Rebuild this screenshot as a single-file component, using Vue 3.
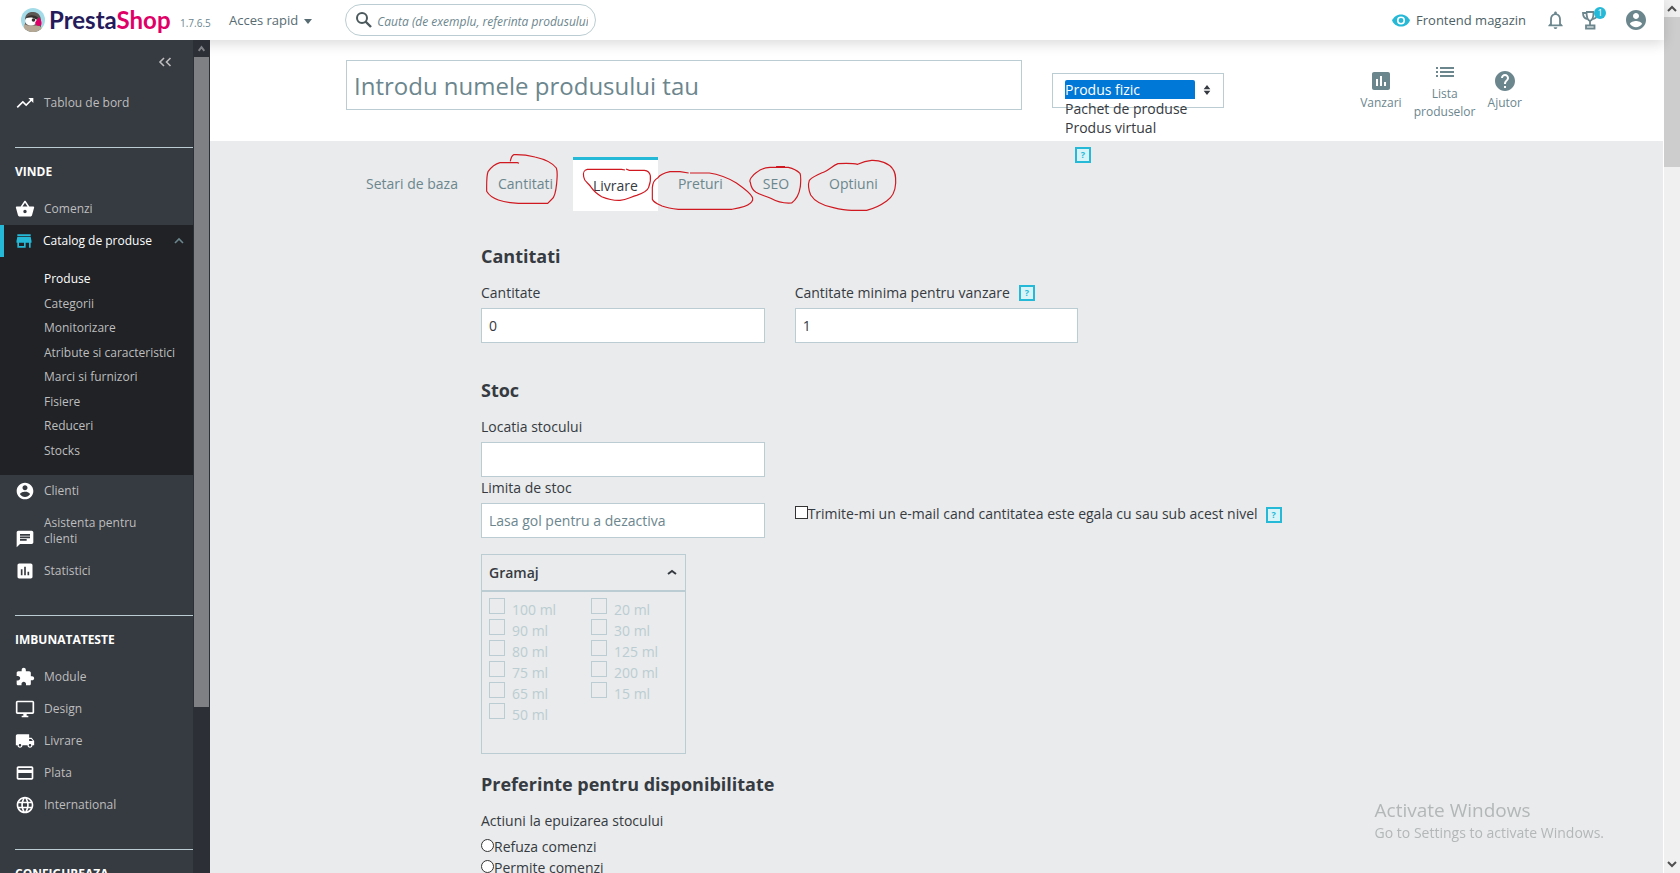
<script setup>
import { ref } from 'vue'

const icons = {
  trending: 'M16 6l2.29 2.29-4.88 4.88-4-4L2 16.59 3.41 18l6-6 4 4 6.3-6.29L22 12V6z',
  basket: 'M17.21 9l-4.38-6.56c-.19-.28-.51-.42-.83-.42-.32 0-.64.14-.83.43L6.79 9H2c-.55 0-1 .45-1 1 0 .09.01.18.04.27l2.54 9.27c.23.84 1 1.46 1.92 1.46h13c.92 0 1.69-.62 1.93-1.46l2.54-9.27L23 10c0-.55-.45-1-1-1h-4.79zM9 9l3-4.4L15 9H9zm3 8c-1.1 0-2-.9-2-2s.9-2 2-2 2 .9 2 2-.9 2-2 2z',
  store: 'M20 4H4v2h16V4zm1 10v-2l-1-5H4l-1 5v2h1v6h10v-6h4v6h2v-6h1zm-9 4H6v-4h6v4z',
  account: 'M12 2C6.48 2 2 6.48 2 12s4.48 10 10 10 10-4.48 10-10S17.52 2 12 2zm0 3c1.66 0 3 1.34 3 3s-1.34 3-3 3-3-1.34-3-3 1.34-3 3-3zm0 14.2c-2.5 0-4.71-1.28-6-3.22.03-1.99 4-3.08 6-3.08 1.99 0 5.97 1.09 6 3.08-1.29 1.94-3.5 3.22-6 3.22z',
  chat: 'M20 2H4c-1.1 0-1.99.9-1.99 2L2 22l4-4h14c1.1 0 2-.9 2-2V4c0-1.1-.9-2-2-2zM6 9h12v2H6V9zm8 5H6v-2h8v2zm4-6H6V6h12v2z',
  assessment: 'M19 3H5c-1.1 0-2 .9-2 2v14c0 1.1.9 2 2 2h14c1.1 0 2-.9 2-2V5c0-1.1-.9-2-2-2zM9 17H7v-7h2v7zm4 0h-2V7h2v10zm4 0h-2v-4h2v4z',
  extension: 'M20.5 11H19V7c0-1.1-.9-2-2-2h-4V3.5C13 2.12 11.88 1 10.5 1S8 2.12 8 3.5V5H4c-1.1 0-1.99.9-1.99 2v3.8H3.5c1.49 0 2.7 1.21 2.7 2.7s-1.21 2.7-2.7 2.7H2V20c0 1.1.9 2 2 2h3.8v-1.5c0-1.49 1.21-2.7 2.7-2.7 1.49 0 2.7 1.21 2.7 2.7V22H17c1.1 0 2-.9 2-2v-4h1.5c1.38 0 2.5-1.12 2.5-2.5S21.88 11 20.5 11z',
  desktop: 'M21 2H3c-1.1 0-2 .9-2 2v12c0 1.1.9 2 2 2h7v2H8v2h8v-2h-2v-2h7c1.1 0 2-.9 2-2V4c0-1.1-.9-2-2-2zm0 14H3V4h18v12z',
  shipping: 'M20 8h-3V4H3c-1.1 0-2 .9-2 2v11h2c0 1.66 1.34 3 3 3s3-1.34 3-3h6c0 1.66 1.34 3 3 3s3-1.34 3-3h2v-5l-3-4zM6 18.5c-.83 0-1.5-.67-1.5-1.5s.67-1.5 1.5-1.5 1.5.67 1.5 1.5-.67 1.5-1.5 1.5zm13.5-9l1.96 2.5H17V9.5h2.5zm-1.5 9c-.83 0-1.5-.67-1.5-1.5s.67-1.5 1.5-1.5 1.5.67 1.5 1.5-.67 1.5-1.5 1.5z',
  payment: 'M20 4H4c-1.11 0-1.99.89-1.99 2L2 18c0 1.11.89 2 2 2h16c1.11 0 2-.89 2-2V6c0-1.11-.89-2-2-2zm0 14H4v-6h16v6zm0-10H4V6h16v2z',
  language: 'M11.99 2C6.47 2 2 6.48 2 12s4.47 10 9.99 10C17.52 22 22 17.52 22 12S17.52 2 11.99 2zm6.93 6h-2.95c-.32-1.25-.78-2.45-1.38-3.56 1.84.63 3.37 1.91 4.33 3.56zM12 4.04c.83 1.2 1.48 2.53 1.91 3.96h-3.82c.43-1.43 1.08-2.76 1.91-3.96zM4.26 14C4.1 13.36 4 12.69 4 12s.1-1.36.26-2h3.38c-.08.66-.14 1.32-.14 2 0 .68.06 1.34.14 2H4.26zm.82 2h2.95c.32 1.25.78 2.45 1.38 3.56-1.84-.63-3.37-1.9-4.33-3.56zm2.95-8H5.08c.96-1.66 2.49-2.93 4.33-3.56C8.81 5.55 8.35 6.75 8.03 8zM12 19.96c-.83-1.2-1.48-2.53-1.91-3.96h3.82c-.43 1.43-1.08 2.76-1.91 3.96zM14.34 14H9.66c-.09-.66-.16-1.32-.16-2 0-.68.07-1.35.16-2h4.68c.09.65.16 1.32.16 2 0 .68-.07 1.34-.16 2zm.25 5.56c.6-1.11 1.06-2.31 1.38-3.56h2.95c-.96 1.65-2.49 2.93-4.33 3.56zM16.36 14c.08-.66.14-1.32.14-2 0-.68-.06-1.34-.14-2h3.38c.16.64.26 1.31.26 2s-.1 1.36-.26 2h-3.38z',
  list: 'M3 13h2v-2H3v2zm0 4h2v-2H3v2zm0-8h2V7H3v2zm4 4h14v-2H7v2zm0 4h14v-2H7v2zM7 7v2h14V7H7z',
  help: 'M12 2C6.48 2 2 6.48 2 12s4.48 10 10 10 10-4.48 10-10S17.52 2 12 2zm1 17h-2v-2h2v2zm2.07-7.75l-.9.92C13.45 12.9 13 13.5 13 15h-2v-.5c0-1.1.45-2.1 1.17-2.83l1.24-1.26c.37-.36.59-.86.59-1.41 0-1.1-.9-2-2-2s-2 .9-2 2H8c0-2.21 1.79-4 4-4s4 1.79 4 4c0 .88-.36 1.68-.93 2.25z'
}

// meniul lateral
const sections = [
  {
    title: '',
    items: [{ label: 'Tablou de bord', icon: 'trending' }]
  },
  {
    title: 'VINDE',
    items: [
      { label: 'Comenzi', icon: 'basket' },
      {
        label: 'Catalog de produse',
        icon: 'store',
        active: true,
        children: [
          'Produse',
          'Categorii',
          'Monitorizare',
          'Atribute si caracteristici',
          'Marci si furnizori',
          'Fisiere',
          'Reduceri',
          'Stocks'
        ]
      },
      { label: 'Clienti', icon: 'account' },
      { label: 'Asistenta pentru clienti', icon: 'chat' },
      { label: 'Statistici', icon: 'assessment' }
    ]
  },
  {
    title: 'IMBUNATATESTE',
    items: [
      { label: 'Module', icon: 'extension' },
      { label: 'Design', icon: 'desktop' },
      { label: 'Livrare', icon: 'shipping' },
      { label: 'Plata', icon: 'payment' },
      { label: 'International', icon: 'language' }
    ]
  },
  { title: 'CONFIGUREAZA', items: [] }
]

const tabs = ['Setari de baza', 'Cantitati', 'Livrare', 'Preturi', 'SEO', 'Optiuni']
const activeTab = ref('Livrare')

const actions = [
  { label: 'Vanzari', icon: 'assessment' },
  { label: 'Lista produselor', icon: 'list' },
  { label: 'Ajutor', icon: 'help' }
]

const productName = ref('')
const productType = ref('fizic')
const quantity = ref('0')
const minQuantity = ref('1')
const stockLocation = ref('')
const stockLimit = ref('')
const notify = ref(false)
const outOfStock = ref('')

const weightsOpen = ref(true)
const weights = [
  ['100 ml', '90 ml', '80 ml', '75 ml', '65 ml', '50 ml'],
  ['20 ml', '30 ml', '125 ml', '200 ml', '15 ml']
]
</script>

<template>
  <div class="app">
    <div class="page">
      <!-- bara de sus -->
      <header class="topbar">
        <a href="#" class="logo">
          <svg class="logo-mark" viewBox="0 0 24 24">
            <circle cx="12" cy="12" r="12" fill="#a4dbe8" />
            <path d="M4 21V12C4 6 8 3.500 12.500 4C18 4.500 20 8.500 20 12.500V21A12 12 0 0 1 4 21Z" fill="#5d5754" />
            <path d="M3 20V16L7 17.500H18L21 20A12 12 0 0 1 3 20Z" fill="#b5a894" />
            <ellipse cx="10" cy="13" rx="6" ry="4.500" fill="#fff" />
            <path d="M4.500 10C8 6.500 13 6.500 17 9.500L15.500 11.500C12 9 9 9 4.500 10Z" fill="#35302f" />
            <circle cx="12.500" cy="12" r="1.800" fill="#35302f" />
            <path d="M14 15C15 12.500 17 11 18 9C19.500 11.500 21.500 14 20 17.500C18 18.500 15 18 14 15Z" fill="#df0067" />
          </svg>
          <span class="wordmark"><span>Presta</span><span class="pink">Shop</span></span>
        </a>
        <span class="version">1.7.6.5</span>
        <button class="quick" type="button">Acces rapid <i class="caret"></i></button>
        <label class="search">
          <svg viewBox="0 0 18 18" class="search-icon">
            <circle cx="7" cy="7" r="5" fill="none" stroke="#4b585c" stroke-width="2" />
            <path d="M10.500 10.500L16 16" stroke="#4b585c" stroke-width="2.400" />
          </svg>
          <input type="text" aria-label="Cauta" placeholder="Cauta (de exemplu, referinta produsului, n" />
        </label>
        <div class="top-right">
          <a href="#" class="front-link">
            <svg viewBox="1 4 22 16" class="eye">
              <path fill="#25b9d7" d="M12 4.500C7 4.500 2.730 7.610 1 12c1.730 4.390 6 7.500 11 7.500s9.270-3.110 11-7.500c-1.730-4.390-6-7.500-11-7.500z" />
              <circle cx="12" cy="12" r="4" fill="none" stroke="#fff" stroke-width="2" />
            </svg>
            Frontend magazin
          </a>
          <button class="icon-btn bell" type="button" aria-label="Notificari">
            <svg viewBox="4 2 16 20">
              <path fill="#6c868e" d="M12 22c1.100 0 2-.9 2-2h-4c0 1.100.9 2 2 2zm6-6v-5c0-3.070-1.630-5.640-4.500-6.320V4c0-.83-.67-1.500-1.500-1.500s-1.500.67-1.500 1.500v.68C7.640 5.360 6 7.920 6 11v5l-2 2v1h16v-1l-2-2zm-2 1H8v-6c0-2.480 1.510-4.500 4-4.500s4 2.020 4 4.500v6z" />
            </svg>
          </button>
          <button class="icon-btn trophy" type="button" aria-label="Realizari">
            <svg viewBox="0 0 16 20" fill="none" stroke="#6c868e" stroke-width="1.800">
              <path d="M4 2H12M4.500 2C4.500 7 5.500 10 8 11C10.500 10 11.500 7 11.500 3" />
              <path d="M4 3H1C1 6.500 2.500 8.500 5.500 9M15 5C15 7 13.500 8.500 10.500 9" />
              <path d="M8 11V15M4 15.500H12.500V18.500H4Z" />
            </svg>
            <span class="badge">1</span>
          </button>
          <button class="icon-btn avatar" type="button" aria-label="Cont">
            <svg viewBox="2 2 20 20"><path fill="#6c868e" :d="icons.account" /></svg>
          </button>
        </div>
      </header>

      <div class="body">
        <aside class="sidebar">
          <nav class="menu">
            <button class="collapse" type="button" aria-label="Restrange meniul">
              <svg viewBox="0 0 14 10" fill="none" stroke="#bebebe" stroke-width="1.600">
                <path d="M6 1L2 5L6 9M12.500 1L8.500 5L12.500 9" />
              </svg>
            </button>
            <section v-for="section in sections" :key="section.title" class="menu-section">
              <h3 v-if="section.title">{{ section.title }}</h3>
              <div v-for="item in section.items" :key="item.label" :class="['item', { active: item.active }]">
                <a href="#" class="item-link">
                  <svg viewBox="0 0 24 24" class="item-icon"><path :d="icons[item.icon]" /></svg>
                  <span>{{ item.label }}</span>
                  <svg v-if="item.children" class="chevron" viewBox="0 0 10 7">
                    <path d="M1 6L5 2L9 6" fill="none" stroke="#6c868e" stroke-width="1.600" />
                  </svg>
                </a>
                <div v-if="item.children" class="submenu">
                  <a v-for="(child, i) in item.children" :key="child" href="#" :class="{ current: i === 0 }">{{ child }}</a>
                </div>
              </div>
            </section>
          </nav>
          <div class="side-scroll">
            <svg viewBox="0 0 16 17"><path d="M5 11L8 7L11 11" fill="none" stroke="#808287" stroke-width="2" /></svg>
            <div class="side-thumb"></div>
          </div>
        </aside>

        <main class="content">
          <div class="product-head">
            <div class="head-inner">
              <input v-model="productName" class="name-input" type="text" aria-label="Nume produs" placeholder="Introdu numele produsului tau" />
              <div class="type-column">
                <div class="type-box">
                  <select v-model="productType" size="3" aria-label="Tip produs">
                    <option value="fizic">Produs fizic</option>
                    <option value="pachet">Pachet de produse</option>
                    <option value="virtual">Produs virtual</option>
                  </select>
                  <svg class="sort" viewBox="0 0 8 12"><path d="M0 5L4 0L8 5ZM0 7L4 12L8 7Z" fill="#363a41" /></svg>
                </div>
                <button class="hint type-hint" type="button">?</button>
              </div>
              <div class="actions">
                <a v-for="a in actions" :key="a.label" href="#">
                  <svg viewBox="0 0 24 24"><path :d="icons[a.icon]" /></svg>
                  <span>{{ a.label }}</span>
                </a>
              </div>
            </div>
          </div>

          <div class="tabs">
            <button
              v-for="tab in tabs"
              :key="tab"
              type="button"
              :class="['tab', { active: activeTab === tab }]"
              @click="activeTab = tab"
            >{{ tab }}</button>
            <!-- marcaje rosii desenate peste taburi -->
            <svg class="marks" viewBox="0 0 1380 240" fill="none" stroke="#d01820" stroke-width="3.500">
              <path d="M177 70L172 68H120C105 72 94 81 84 95C79 108 80 130 80 154C88 168 100 175 115 180C135 187 152 189 175 190H263L276 177C286 170 288 150 290 130C291 112 294 98 289 84C275 66 252 57 225 51C205 46 185 43 161 44C153 48 153 55 151 64" />
              <path d="M495 90L485 88H382C370 91 369 98 371 110C372 125 385 128 392 140C400 152 411 162 425 170C440 176 458 182 480 181C500 179 512 171 530 166C548 160 562 154 566 142C570 132 573 120 571 107C569 95 563 92 553 91H508L498 87" />
              <path d="M686 99L660 95H630C612 99 600 104 594 113C584 118 578 130 577 142V178C584 190 596 193 606 198C622 204 635 206 655 208H815C838 204 862 200 869 191C880 183 880 176 876 170C868 155 845 140 828 128C802 113 775 103 748 99H690" />
              <path d="M978 82H930C913 83 900 88 890 97C876 107 866 120 871 127C873 142 878 150 888 157C900 164 915 167 932 175C950 185 970 191 995 189C1010 178 1018 160 1021 140C1022 125 1024 110 1020 100C1010 90 998 85 985 82H950V80H975" />
              <path d="M1193 73C1180 70 1155 70 1134 71C1118 77 1110 88 1094 95C1078 102 1060 108 1048 121C1043 135 1046 150 1052 165C1065 186 1090 197 1120 203C1140 208 1158 212 1180 211H1220C1245 205 1262 196 1280 183C1300 170 1306 150 1307 130C1307 112 1308 98 1297 85C1286 70 1260 60 1235 61C1218 62 1207 66 1193 73Z" />
            </svg>
          </div>

          <form class="form" @submit.prevent>
            <h2>Cantitati</h2>
            <div class="row">
              <div class="field">
                <label for="qty">Cantitate</label>
                <input id="qty" v-model="quantity" type="text" />
              </div>
              <div class="field">
                <div class="label-line">
                  <label for="min-qty">Cantitate minima pentru vanzare</label>
                  <button class="hint" type="button">?</button>
                </div>
                <input id="min-qty" v-model="minQuantity" type="text" />
              </div>
            </div>

            <h2>Stoc</h2>
            <div class="row">
              <div class="field">
                <label for="location">Locatia stocului</label>
                <input id="location" v-model="stockLocation" type="text" />
              </div>
            </div>
            <div class="row">
              <div class="field">
                <label for="limit">Limita de stoc</label>
                <input id="limit" v-model="stockLimit" type="text" placeholder="Lasa gol pentru a dezactiva" />
              </div>
              <div class="notify">
                <label class="choice">
                  <input v-model="notify" type="checkbox" />Trimite-mi un e-mail cand cantitatea este egala cu sau sub acest nivel
                </label>
                <button class="hint" type="button">?</button>
              </div>
            </div>

            <div class="weights">
              <button class="weights-head" type="button" @click="weightsOpen = !weightsOpen">
                Gramaj
                <svg viewBox="0 0 10 7"><path d="M1 5L5 2L9 5" fill="none" stroke="#363a41" stroke-width="2" /></svg>
              </button>
              <div v-if="weightsOpen" class="weights-body">
                <div v-for="(column, i) in weights" :key="i" class="weights-column">
                  <label v-for="w in column" :key="w"><input type="checkbox" disabled /><span>{{ w }}</span></label>
                </div>
              </div>
            </div>

            <h2 class="pref-title">Preferinte pentru disponibilitate</h2>
            <p class="pref-label">Actiuni la epuizarea stocului</p>
            <label class="choice"><input v-model="outOfStock" type="radio" name="oos" value="deny" />Refuza comenzi</label>
            <label class="choice"><input v-model="outOfStock" type="radio" name="oos" value="allow" />Permite comenzi</label>
          </form>

          <div class="watermark">
            <div class="wm-title">Activate Windows</div>
            <div class="wm-text">Go to Settings to activate Windows.</div>
          </div>
        </main>
      </div>
    </div>

    <div class="page-scroll">
      <svg viewBox="0 0 16 17"><path d="M4 11L8 7L12 11" fill="none" stroke="#505050" stroke-width="2" /></svg>
      <div class="page-thumb"></div>
      <svg viewBox="0 0 16 17"><path d="M4 6L8 10L12 6" fill="none" stroke="#505050" stroke-width="2" /></svg>
    </div>
  </div>
</template>

<style>
body {
  margin: 0;
}
</style>

<style scoped>
.app,
.app * {
  box-sizing: border-box;
}

.app {
  display: flex;
  height: 100vh;
  overflow: hidden;
  font-family: "Open Sans", "Liberation Sans", sans-serif;
  font-size: 14px;
  line-height: 21px;
  color: #363a41;
  background: #e9ebec;
}

button {
  padding: 0;
  border: none;
  background: none;
  font: inherit;
  color: inherit;
  cursor: pointer;
}

input,
select {
  font: inherit;
  color: inherit;
}

a {
  color: inherit;
  text-decoration: none;
}

svg {
  display: block;
  flex: none;
}

.page {
  flex: 1;
  min-width: 0;
  display: flex;
  flex-direction: column;
}

/* bara de sus */
.topbar {
  position: relative;
  z-index: 2;
  flex: none;
  display: flex;
  align-items: center;
  height: 40px;
  padding-left: 21px;
  padding-right: 18px;
  background: #fff;
  box-shadow: 0 4px 12px rgba(0, 0, 0, 0.14);
}

.logo {
  display: flex;
  align-items: center;
  gap: 4px;
}

.logo-mark {
  width: 24px;
  height: 24px;
}

.wordmark {
  width: 120px;
  font-family: Lato, "Open Sans", sans-serif;
  font-size: 24px;
  font-weight: 700;
  line-height: 24px;
  color: #251b5b;
}

.pink {
  color: #df0067;
}

.version {
  margin-left: 11px;
  padding-top: 6px;
  width: 32px;
  font-size: 10px;
  line-height: 16px;
  color: #6c868e;
  white-space: nowrap;
}

.quick {
  display: flex;
  align-items: center;
  gap: 6px;
  margin-left: 17px;
  font-size: 13px;
  color: #576c72;
}

.caret {
  margin-top: 2px;
  border: 4px solid transparent;
  border-top: 5px solid #576c72;
  border-bottom: none;
}

.search {
  display: flex;
  align-items: center;
  gap: 4px;
  width: 251px;
  height: 32px;
  margin-left: 33px;
  padding: 0 7px 0 9px;
  border: 1px solid #bbcdd2;
  border-radius: 16px;
  background: #fff;
}

.search-icon {
  width: 18px;
  height: 18px;
}

.search input {
  flex: 1;
  min-width: 0;
  padding: 2px 0 0;
  border: none;
  outline: none;
  background: none;
  font-size: 12px;
  font-style: italic;
}

::placeholder {
  color: #6c868e;
  opacity: 1;
}

.top-right {
  display: flex;
  align-items: center;
  margin-left: auto;
}

.front-link {
  display: flex;
  align-items: center;
  gap: 6px;
  font-size: 13px;
  color: #4e5f66;
}

.eye {
  width: 18px;
  height: 13px;
}

.icon-btn {
  position: relative;
}

.bell {
  margin-left: 22px;
}

.bell svg {
  width: 15px;
  height: 18px;
}

.trophy {
  margin-left: 19px;
}

.trophy svg {
  width: 16px;
  height: 20px;
}

.badge {
  position: absolute;
  top: -3px;
  left: 12px;
  width: 12px;
  height: 12px;
  border-radius: 50%;
  background: #25b9d7;
  color: #fff;
  font-size: 9px;
  line-height: 12px;
  text-align: center;
}

.avatar {
  margin-left: 28px;
}

.avatar svg {
  width: 20px;
  height: 20px;
}

.body {
  flex: 1;
  min-height: 0;
  display: flex;
}

/* meniu lateral */
.sidebar {
  flex: none;
  display: flex;
  width: 210px;
  overflow: hidden;
  background: #363a41;
  position: relative;
  z-index: 3;
}

.menu {
  flex: 1;
  min-width: 0;
  font-size: 12px;
  line-height: 16px;
  color: #bebebe;
}

.collapse {
  display: block;
  margin: 17px 21px 20px auto;
}

.collapse svg {
  width: 14px;
  height: 10px;
}

.menu-section + .menu-section::before {
  content: "";
  display: block;
  height: 1px;
  margin: 28px 0 0 15px;
  background: #bbcdd2;
}

.menu h3 {
  margin: 0;
  padding: 16px 15px 13px;
  font-size: 12px;
  line-height: 16px;
  font-weight: 700;
  color: #fff;
}

.item-link {
  display: flex;
  align-items: flex-end;
  padding: 8px 9px 8px 15px;
}

.item-link span {
  width: 122px;
  margin-left: 9px;
}

.item-icon {
  width: 20px;
  height: 20px;
  margin: -2px 0;
  fill: #fff;
}

.active > .item-link {
  padding-left: 10px;
  border-left: 4px solid #25b9d7;
  color: #fff;
}

.active .item-icon {
  fill: #25b9d7;
}

.item.active {
  background: #202226;
}

.chevron {
  width: 10px;
  height: 7px;
  margin-left: auto;
  margin-bottom: 5px;
}

.submenu {
  display: flex;
  flex-direction: column;
  justify-content: space-between;
  min-height: 218px;
  padding: 14px 0 16px 44px;
  white-space: nowrap;
}

.submenu .current {
  color: #fff;
}

.side-scroll {
  display: flex;
  flex-direction: column;
  flex: none;
  width: 17px;
  padding: 0 1px;
  background: #2c2f36;
}

.side-scroll svg {
  height: 17px;
}

.side-thumb {
  height: 78%;
  background: #7f8084;
}

/* antet produs */
.content {
  flex: 1;
  min-width: 0;
  border-right: 1px solid #fff;
}

.product-head {
  background: #fff;
}

.head-inner {
  display: flex;
  align-items: flex-start;
  max-width: 1201px;
  height: 101px;
  margin: 0 auto;
  padding: 20px 15px 0 10px;
}

.name-input {
  flex: 0 1 676px;
  min-width: 0;
  height: 50px;
  padding: 0 7px;
  border: 1px solid #bbcdd2;
  font-size: 24px;
  line-height: 32px;
}

.type-column {
  flex: none;
  width: 172px;
  margin: 13px 0 0 30px;
}

.type-box {
  display: flex;
  align-items: flex-start;
  justify-content: space-between;
  height: 35px;
  padding: 6px 12px 0;
  border: 1px solid #bbcdd2;
}

.type-box select {
  width: 130px;
  height: 57px;
  padding: 0;
  border: none;
  outline: none;
  background: none;
  overflow: hidden;
}

.type-box option {
  height: 19px;
  min-height: 19px;
  padding: 0;
  line-height: 19px;
  color: #363a41;
}

.type-box option:checked {
  background: linear-gradient(#0078d7, #0078d7);
  color: #fff;
  -webkit-text-fill-color: #fff;
}

.sort {
  width: 8px;
  height: 10px;
  margin-top: 5px;
}

.hint {
  width: 16px;
  height: 16px;
  border: 2px solid #25b9d7;
  background: #d8f4f9;
  color: #25b9d7;
  font-size: 9px;
  font-weight: 700;
  line-height: 12px;
  text-align: center;
}

.type-hint {
  display: block;
  margin: 39px 0 0 23px;
}

.actions {
  display: flex;
  align-items: center;
  gap: 12px;
  height: 60px;
  margin-left: auto;
  color: #6c868e;
  font-size: 12px;
  line-height: 18px;
  text-align: center;
}

.actions a {
  display: flex;
  flex-direction: column;
  align-items: center;
  gap: 1px;
}

.actions a:nth-child(2) {
  width: 62px;
}

.actions svg {
  width: 24px;
  height: 24px;
  fill: #6c868e;
}

/* taburi */
.tabs {
  position: relative;
  display: flex;
  max-width: 1181px;
  height: 54px;
  margin: 16px auto 0;
}

.tab {
  padding: 0 20px 2px;
  color: #6c868e;
}

.tab.active {
  padding-bottom: 0;
  border-top: 3px solid #25b9d7;
  background: #fff;
  color: #363a41;
}

.marks {
  position: absolute;
  left: 114px;
  top: -17px;
  width: 460px;
  height: 80px;
}

/* formular */
.form {
  max-width: 911px;
  margin: 0 auto;
  padding-top: 33px;
}

h2 {
  margin: 0 0 14px;
  font-size: 18px;
  line-height: 24px;
  font-weight: 700;
}

.row {
  display: grid;
  grid-template-columns: repeat(3, 1fr);
  column-gap: 30px;
}

.row + h2 {
  margin-top: 35px;
}

.field {
  display: flex;
  flex-direction: column;
  gap: 4px;
}

.field label {
  line-height: 22px;
}

.label-line {
  display: flex;
  align-items: center;
  gap: 9px;
}

.field > input {
  width: 100%;
  height: 35px;
  padding: 0 7px;
  border: 1px solid #bbcdd2;
  background: #fff;
}

.notify {
  grid-column: span 2;
  display: flex;
  align-items: flex-start;
  gap: 8px;
  padding-top: 26px;
}

.notify .hint {
  margin-top: 4px;
}

.choice {
  display: flex;
  align-items: center;
}

.choice input {
  appearance: none;
  flex: none;
  width: 13px;
  height: 13px;
  margin: 0 0 2px;
  border: 1px solid #333;
  background: #fff;
}

.choice input[type="radio"] {
  border-radius: 50%;
}

.weights {
  width: 205px;
  min-height: 200px;
  margin-top: 16px;
  border: 1px solid #bbcdd2;
}

.weights-head {
  display: flex;
  align-items: center;
  justify-content: space-between;
  width: 100%;
  height: 37px;
  padding: 0 8px 0 7px;
  border-bottom: 2px solid #bbcdd2;
  font-weight: 600;
}

.weights-head svg {
  width: 10px;
  height: 7px;
}

.weights-body {
  display: grid;
  grid-template-columns: 102px 1fr;
  padding: 6px 0 0 7px;
  color: #bbcdd2;
}

.weights-column label {
  display: flex;
  align-items: flex-start;
  gap: 7px;
  height: 21px;
}

.weights-column span {
  padding-top: 1px;
}

.weights-column input {
  appearance: none;
  width: 16px;
  height: 16px;
  margin: 0;
  border: 1px solid #bbcdd2;
}

.pref-title {
  margin-top: 18px;
}

.pref-label {
  margin: 0 0 4px;
  line-height: 22px;
}

/* mesaj de sistem peste pagina */
.watermark {
  position: fixed;
  right: 76px;
  bottom: 30px;
  color: #b4b7b8;
}

.wm-title {
  font-size: 19px;
  line-height: 26px;
}

.wm-text {
  font-size: 14px;
  line-height: 20px;
}

.page-scroll {
  flex: none;
  display: flex;
  flex-direction: column;
  width: 16px;
  background: #f0f0f0;
}

.page-scroll svg {
  width: 16px;
  height: 17px;
}

.page-thumb {
  height: 150px;
  margin-bottom: auto;
  background: #cdcdcd;
}
</style>
